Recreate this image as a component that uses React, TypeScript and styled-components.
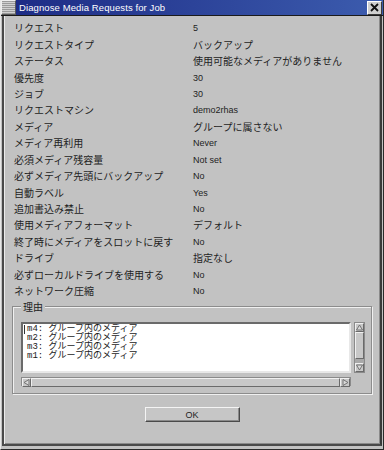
import { Fragment } from 'react'
import styled, { createGlobalStyle } from 'styled-components'

const Global = createGlobalStyle`
  html, body {
    margin: 0;
    padding: 0;
    background: #c2c2c2;
  }
`

const Window = styled.div`
  width: 384px;
  height: 450px;
  box-sizing: border-box;
  display: flex;
  flex-direction: column;
  background: #c2c2c2;
  border-left: 1px solid #e8e8e8;
  border-right: 1px solid #2a2a2a;
  border-bottom: 1px solid #2a2a2a;
  overflow: hidden;
`

const TitleBar = styled.div`
  height: 16px;
  flex: none;
  display: flex;
  align-items: center;
  background: linear-gradient(to right, #1c2a84, #3c5cae);
  border-bottom: 1px solid #1a1a1a;
  box-sizing: border-box;
`

const TitleIcon = styled.div`
  width: 15px;
  height: 15px;
  box-sizing: border-box;
  background: repeating-linear-gradient(to bottom, #9a9a9a 0 1px, #d0d0d0 1px 2px);
  border: 1px solid #5a5a5a;
  border-left-color: #eee;
  border-top-color: #eee;
  flex: none;
`

const TitleText = styled.div`
  flex: 1;
  padding-left: 3px;
  color: #fff;
  font: 9.5px "Liberation Sans", Arial, sans-serif;
  letter-spacing: 0.1px;
  white-space: nowrap;
`

const CloseButton = styled.div`
  width: 15px;
  height: 14px;
  margin-right: 1px;
  box-sizing: border-box;
  display: flex;
  align-items: center;
  justify-content: center;
  background: #cfcfcf;
  border: 1px solid #3a3a3a;
  border-left-color: #fff;
  border-top-color: #fff;
`

const Frame = styled.div`
  flex: 1;
  display: flex;
  flex-direction: column;
  margin: 0 1px 3px 1px;
  border: 2px solid #4a4a4a;
  border-top: none;
  border-right-color: #3a3a3a;
  box-shadow: inset 1px 0 0 #ececec, inset -1px -1px 0 #8a8a8a;
`

const InfoGrid = styled.div`
  display: grid;
  grid-template-columns: 179px 1fr;
  grid-auto-rows: 16.45px;
  margin: 4px 0 0 0;
  padding-left: 10px;
  align-items: center;
`

const Label = styled.div`
  font: 10px "Noto Sans CJK JP", "Liberation Sans", sans-serif;
  color: #222;
  white-space: nowrap;
  line-height: 16px;
`

const Value = styled.div<{ $jp?: boolean }>`
  font: ${p => (p.$jp ? '10px "Noto Sans CJK JP", sans-serif' : '9px "Liberation Sans", Arial, sans-serif')};
  color: #222;
  white-space: nowrap;
  line-height: 16px;
`

const GroupBox = styled.div`
  position: relative;
  margin: 7px 8px 0 8px;
  height: 88px;
  box-sizing: border-box;
  border: 1px solid #8c8c8c;
  box-shadow: inset 1px 1px 0 #f0f0f0, 1px 1px 0 #f0f0f0;
  padding: 15px 0 0 8px;
`

const Legend = styled.div`
  position: absolute;
  top: -7px;
  left: 8px;
  padding: 0 2px;
  background: #c2c2c2;
  font: 10px "Noto Sans CJK JP", sans-serif;
  color: #222;
  line-height: 13px;
`

const ReasonArea = styled.div`
  display: grid;
  grid-template-columns: 330px 11px;
  grid-template-rows: 51px 9px;
  column-gap: 3px;
  row-gap: 4px;
`

const TextBox = styled.div`
  background: #fff;
  box-sizing: border-box;
  border: 2px solid;
  border-color: #6a6a6a #e8e8e8 #e8e8e8 #6a6a6a;
  padding: 1px 0 0 1px;
  font: 9px "Liberation Mono", "Noto Sans CJK JP", monospace;
  line-height: 9px;
  color: #1a1a1a;
  white-space: pre;
  overflow: hidden;
`

const ReasonLine = styled.div`
  display: flex;
  align-items: center;
  height: 9px;
`

const Caret = styled.span<{ $show: boolean }>`
  display: inline-block;
  width: 1px;
  height: 9px;
  margin-right: 2px;
  background: ${p => (p.$show ? '#333' : 'transparent')};
`

const VScroll = styled.div`
  display: grid;
  grid-template-rows: 9px 1fr 9px;
  box-sizing: border-box;
  background: #a8a8a8;
  border: 1px solid #8a8a8a;
`

const HScroll = styled.div`
  display: grid;
  grid-template-columns: 9px 1fr 10px;
  box-sizing: border-box;
  background: #a8a8a8;
  border: 1px solid #8a8a8a;
`

const ArrowBox = styled.div`
  display: flex;
  align-items: center;
  justify-content: center;
  background: #c8c8c8;
  box-sizing: border-box;
  border: 1px solid;
  border-color: #f0f0f0 #6a6a6a #6a6a6a #f0f0f0;
`

const Thumb = styled.div<{ $size: string }>`
  background: #c8c8c8;
  box-sizing: border-box;
  border: 1px solid;
  border-color: #f0f0f0 #6a6a6a #6a6a6a #f0f0f0;
  ${p => p.$size}
`

const ButtonRow = styled.div`
  display: flex;
  justify-content: center;
  margin-top: 13px;
`

const OkButton = styled.div`
  width: 95px;
  height: 15px;
  box-sizing: border-box;
  display: flex;
  align-items: center;
  justify-content: center;
  background: #c6c6c6;
  border: 1px solid;
  border-color: #f4f4f4 #4a4a4a #4a4a4a #f4f4f4;
  box-shadow: inset -1px -1px 0 #8a8a8a;
  font: 9px "Liberation Sans", Arial, sans-serif;
  color: #222;
`

type Arrow = 'up' | 'down' | 'left' | 'right'

function ArrowIcon({ dir }: { dir: Arrow }) {
  const pts: Record<Arrow, string> = {
    up: '3.5,1 6.5,6 0.5,6',
    down: '0.5,1 6.5,1 3.5,6',
    left: '1,3.5 6,0.5 6,6.5',
    right: '1,0.5 6,3.5 1,6.5',
  }
  return (
    <svg width="7" height="7" viewBox="0 0 7 7">
      <polygon points={pts[dir]} fill="#d8d8d8" stroke="#6a6a6a" strokeWidth="0.9" />
    </svg>
  )
}

const rows: [string, string, boolean?][] = [
  ['リクエスト', '5'],
  ['リクエストタイプ', 'バックアップ', true],
  ['ステータス', '使用可能なメディアがありません', true],
  ['優先度', '30'],
  ['ジョブ', '30'],
  ['リクエストマシン', 'demo2rhas'],
  ['メディア', 'グループに属さない', true],
  ['メディア再利用', 'Never'],
  ['必須メディア残容量', 'Not set'],
  ['必ずメディア先頭にバックアップ', 'No'],
  ['自動ラベル', 'Yes'],
  ['追加書込み禁止', 'No'],
  ['使用メディアフォーマット', 'デフォルト', true],
  ['終了時にメディアをスロットに戻す', 'No'],
  ['ドライブ', '指定なし', true],
  ['必ずローカルドライブを使用する', 'No'],
  ['ネットワーク圧縮', 'No'],
]

const reasons = ['m4: グループ内のメディア', 'm2: グループ内のメディア', 'm3: グループ内のメディア', 'm1: グループ内のメディア']

export default function App() {
  return (
    <>
      <Global />
      <Window>
        <TitleBar>
          <TitleIcon />
          <TitleText>Diagnose Media Requests for Job</TitleText>
          <CloseButton>
            <svg width="9" height="9" viewBox="0 0 9 9">
              <path d="M1 1 L8 8 M8 1 L1 8" stroke="#111" strokeWidth="1.8" />
            </svg>
          </CloseButton>
        </TitleBar>
        <Frame>
          <InfoGrid>
            {rows.map(([label, value, jp]) => (
              <Fragment key={label}>
                <Label>{label}</Label>
                <Value $jp={jp}>{value}</Value>
              </Fragment>
            ))}
          </InfoGrid>

          <GroupBox>
            <Legend>理由</Legend>
            <ReasonArea>
              <TextBox>
                {reasons.map((r, i) => (
                  <ReasonLine key={i}>
                    <Caret $show={i === 0} />
                    {r}
                  </ReasonLine>
                ))}
              </TextBox>
              <VScroll>
                <ArrowBox><ArrowIcon dir="up" /></ArrowBox>
                <div>
                  <Thumb $size="height: 27px;" />
                </div>
                <ArrowBox><ArrowIcon dir="down" /></ArrowBox>
              </VScroll>
              <HScroll>
                <ArrowBox><ArrowIcon dir="left" /></ArrowBox>
                <Thumb $size="height: 100%;" />
                <ArrowBox><ArrowIcon dir="right" /></ArrowBox>
              </HScroll>
            </ReasonArea>
          </GroupBox>

          <ButtonRow>
            <OkButton>OK</OkButton>
          </ButtonRow>
        </Frame>
      </Window>
    </>
  )
}
